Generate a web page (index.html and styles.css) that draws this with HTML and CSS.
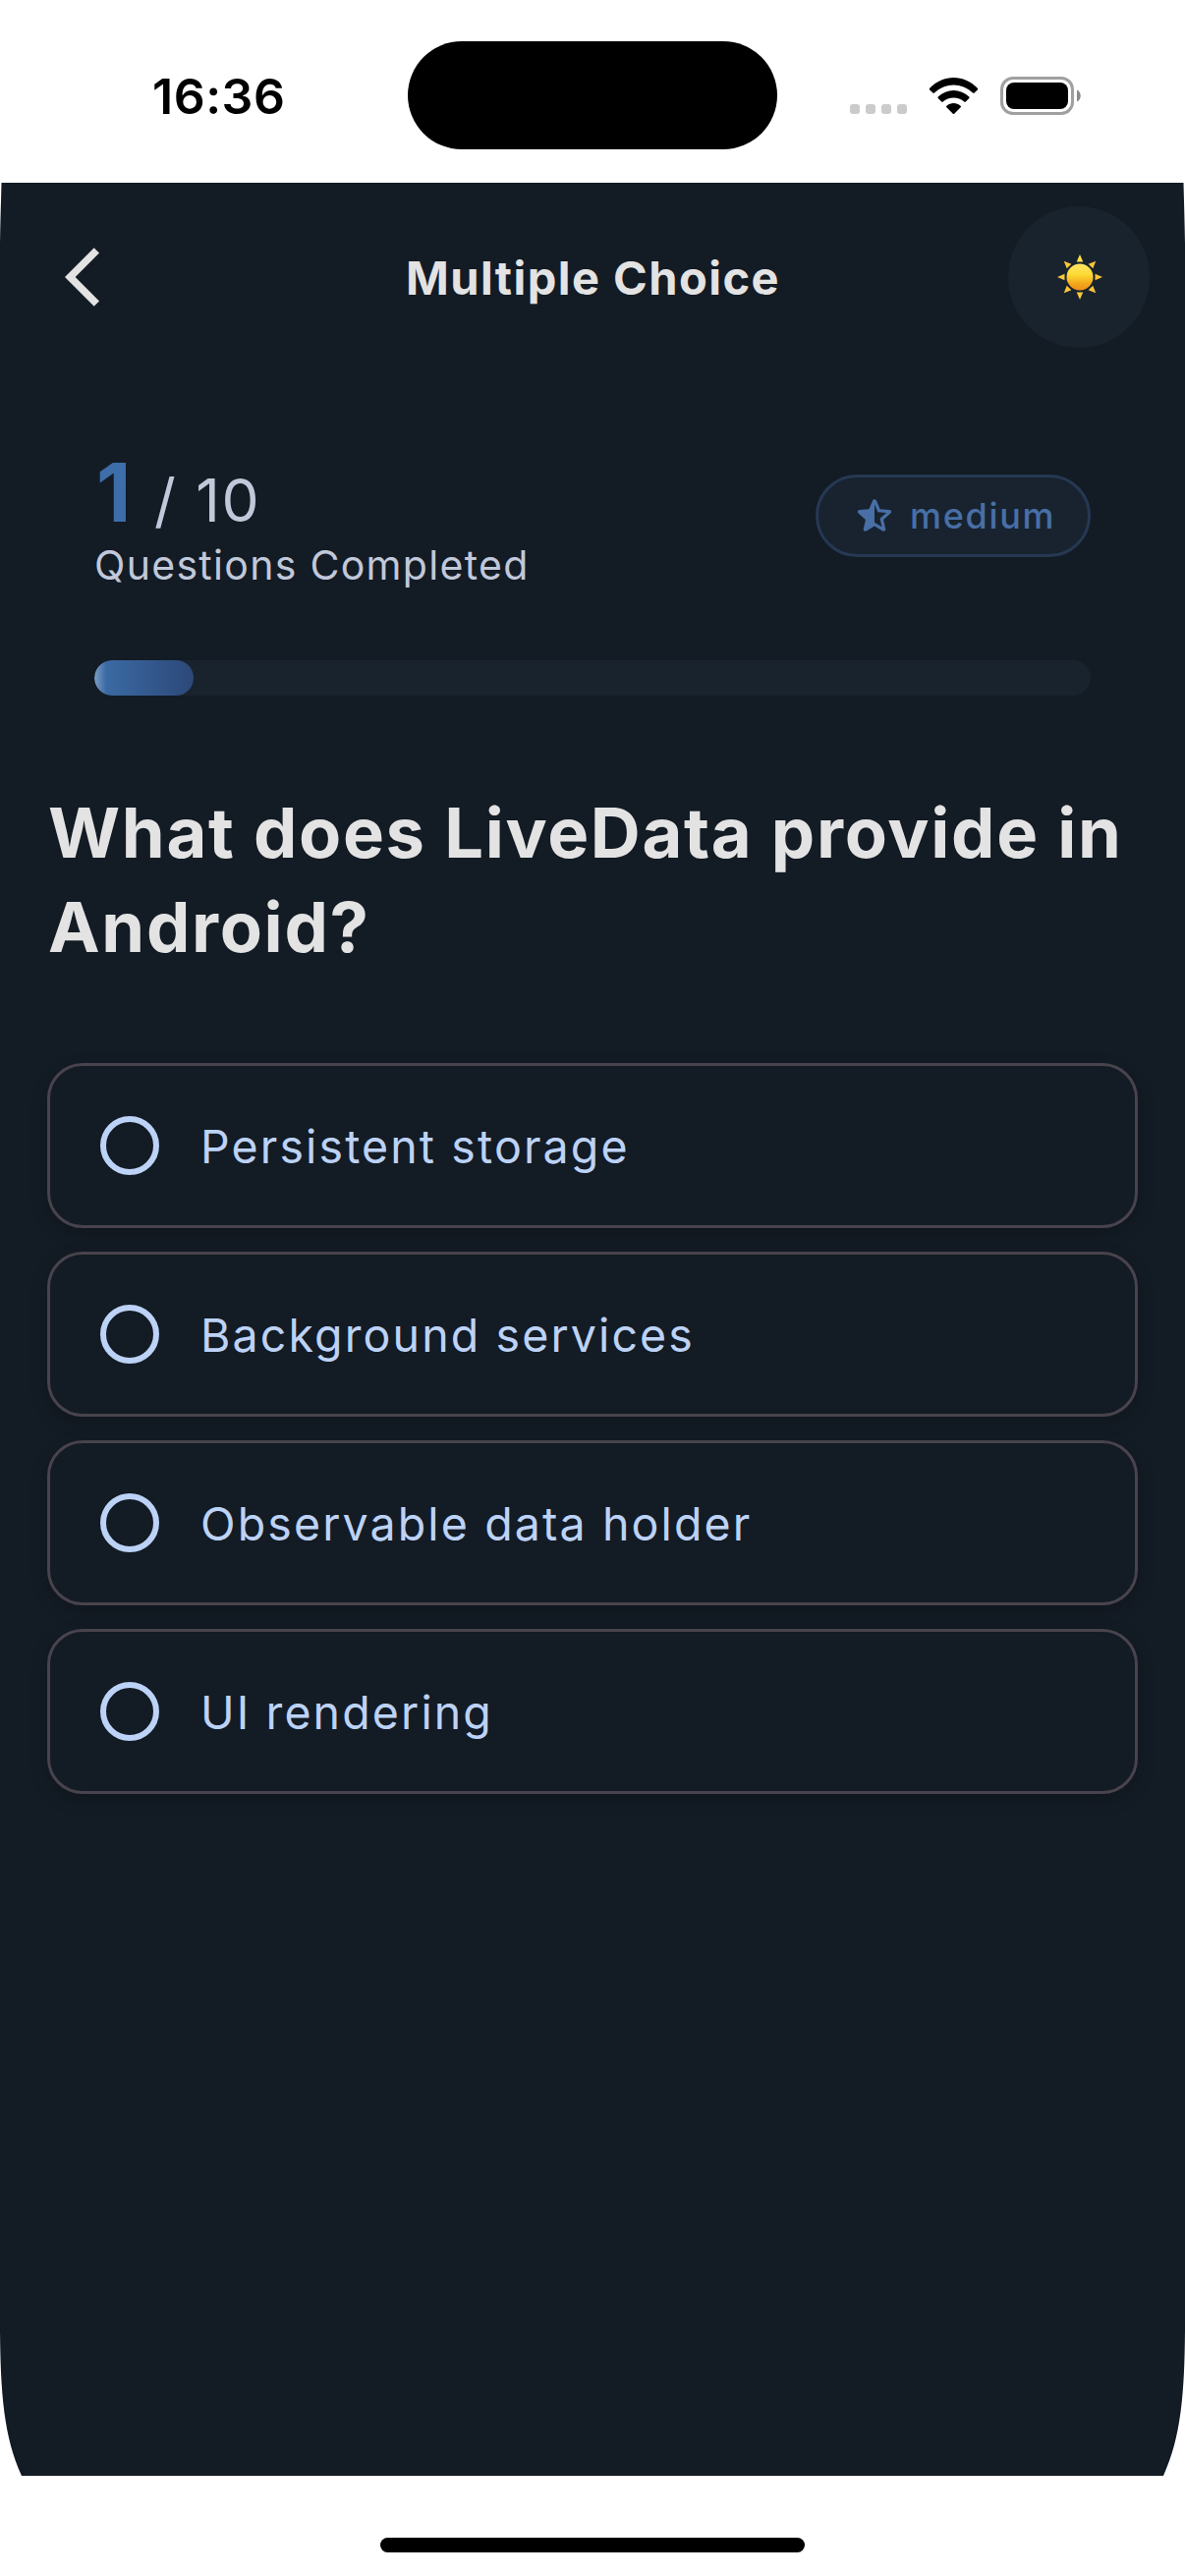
FILE: index.html
```html
<!DOCTYPE html>
<html lang="en">
<head>
<meta charset="utf-8">
<title>Multiple Choice</title>
<link rel="stylesheet" href="styles.css">
</head>
<body>
<div class="phone">
  <header class="status">
    <div class="clock">16:36</div>
    <div class="island"></div>
    <div class="indicators">
      <div class="cell"><i></i><i></i><i></i><i></i></div>
      <svg class="wifi" viewBox="0 0 51 38" aria-hidden="true">
        <path d="M1.200 10.700C15-3.500 36-3.500 49.800 10.700Q50.600 11.600 49.800 12.400L46.600 15.600Q45.900 16.300 45.100 15.600C33.500 4.700 17.500 4.700 5.900 15.600Q5.100 16.300 4.400 15.600L1.200 12.400Q.4 11.600 1.200 10.700z"/>
        <path d="M9.700 19.600C18.700 10.800 32.300 10.800 41.300 19.600Q42 20.300 41.300 21.100L37.800 24.600Q37.100 25.300 36.300 24.600C30.300 19.200 20.700 19.200 14.700 24.600Q13.900 25.300 13.200 24.600L9.700 21.100Q9 20.300 9.700 19.600z"/>
        <path d="M18.400 28.800C22.500 25 28.500 25 32.600 28.800Q33.400 29.500 32.700 30.200L26.200 36.800Q25.500 37.400 24.800 36.800L18.300 30.200Q17.600 29.500 18.400 28.800z"/>
      </svg>
      <svg class="battery" viewBox="0 0 84 40" aria-hidden="true">
        <rect x="1.500" y="1.500" width="72" height="36" rx="11.500" fill="none" stroke="#a0a0a0" stroke-width="3"/>
        <rect x="6" y="6" width="63" height="27" rx="8" fill="#000"/>
        <path d="M78 13.500c5 2 5 10 0 12z" fill="#8a8a8a"/>
      </svg>
    </div>
  </header>

  <main class="app">
    <nav class="bar">
      <svg class="back" viewBox="0 0 24 24" aria-label="Back"><path d="M11.670 3.870 9.900 2.100 0 12l9.900 9.900 1.770-1.770L3.540 12z"/></svg>
      <h1 class="title">Multiple Choice</h1>
      <button class="theme" aria-label="Theme">
        <svg class="sun" viewBox="-24 -24 48 48">
          <defs>
            <linearGradient id="disc" x1="0" y1="0" x2="0" y2="1">
              <stop offset="0" stop-color="#ffe568"/><stop offset=".4" stop-color="#fddb35"/><stop offset=".75" stop-color="#f3a71c"/><stop offset="1" stop-color="#ee8f16"/>
            </linearGradient>
            <path id="ray" d="M0-23 3.300-15.500H-3.300z"/>
          </defs>
          <circle r="13.500" fill="url(#disc)"/>
          <g fill="#fbc638">
            <use href="#ray" fill="#fde04a"/><use href="#ray" transform="rotate(45)"/><use href="#ray" transform="rotate(90)"/><use href="#ray" transform="rotate(135)"/>
            <use href="#ray" transform="rotate(180)"/><use href="#ray" transform="rotate(225)"/><use href="#ray" transform="rotate(270)"/><use href="#ray" transform="rotate(315)"/>
          </g>
        </svg>
      </button>
    </nav>

    <section class="progress">
      <div class="summary">
        <div class="count">
          <div class="numbers"><span class="done">1</span><span class="total"> / 10</span></div>
          <div class="caption">Questions Completed</div>
        </div>
        <div class="badge">
          <svg class="star" viewBox="0 0 24 24" aria-hidden="true"><path d="M19.650 9.040l-4.840-.420-1.890-4.450c-.340-.810-1.500-.810-1.840 0L9.190 8.630l-4.830.410c-.880.070-1.240 1.170-.570 1.750l3.670 3.180-1.100 4.720c-.200.860.730 1.540 1.490 1.080l4.150-2.500 4.150 2.510c.760.460 1.690-.220 1.490-1.080l-1.100-4.730 3.670-3.180c.670-.580.320-1.680-.560-1.750zM12 15.400V6.100l1.710 4.040 4.380.380-3.320 2.880 1 4.280L12 15.400z"/></svg>
          <span>medium</span>
        </div>
      </div>
      <div class="track"><div class="fill"></div></div>
    </section>

    <h2 class="question">What does LiveData provide in Android?</h2>

    <div class="options">
      <div class="option"><span class="radio"></span><span class="label">Persistent storage</span></div>
      <div class="option"><span class="radio"></span><span class="label">Background services</span></div>
      <div class="option"><span class="radio"></span><span class="label">Observable data holder</span></div>
      <div class="option"><span class="radio"></span><span class="label">UI rendering</span></div>
    </div>
  </main>

  <footer class="home"><div class="handle"></div></footer>
</div>
</body>
</html>
```
FILE: styles.css
```css
* { box-sizing: border-box; margin: 0; padding: 0; }

body {
  background: #fff;
  font-family: Inter, "Liberation Sans", sans-serif;
}

.phone {
  width: 1206px;
  height: 2622px;
  display: flex;
  flex-direction: column;
  overflow: hidden;
}

/* Status bar */
.status {
  height: 186px;
  display: grid;
  grid-template-columns: 415px 376px 1fr;
  padding-top: 42px;
  align-items: start;
}
.clock {
  padding-left: 155px;
  height: 111px;
  line-height: 112px;
  font-size: 50px;
  font-weight: 600;
  letter-spacing: 0.500px;
  color: #000;
}
.island { height: 110px; border-radius: 55px; background: #000; }
.indicators {
  display: flex;
  align-items: flex-start;
  padding: 36px 0 0 74px;
}
.cell { display: flex; gap: 6px; margin-top: 28px; }
.cell i { width: 10px; height: 10px; border-radius: 3px; background: #cbcbcb; }
.wifi { width: 51px; height: 38px; margin: 1px 22px 0 22px; }
.battery { width: 84px; height: 40px; }

/* App surface, clipped by the display's rounded corners */
.app {
  height: 2334px;
  background: #131b24;
  clip-path: path("M1.500 0 C1 20 .3 40 0 62 V2186 C.5 2250 4 2295 22 2334 H1184 C1202 2295 1205.500 2250 1206 2186 V62 C1205.700 40 1205 20 1204.500 0 Z");
}

.bar {
  height: 192px;
  padding: 0 36px 0 66px;
  display: grid;
  grid-template-columns: 144px 1fr 144px;
  align-items: center;
}
.back { width: 72px; height: 72px; fill: #e3e3e3; }
.title {
  text-align: center;
  font-size: 47px;
  font-weight: 700;
  letter-spacing: 1.450px;
  margin-left: -29px;
  color: #e3e3e3;
}
.theme {
  width: 144px;
  height: 144px;
  border: 0;
  border-radius: 50%;
  background: #19232e;
  display: flex;
  align-items: center;
  justify-content: center;
}
.sun { width: 48px; height: 48px; margin-left: 2px; }

.progress { padding: 72px 96px 0; }
.summary { display: flex; justify-content: space-between; height: 222px; }
.numbers { line-height: 104px; height: 98px; white-space: pre; }
.done { padding-left: 2px; font-size: 82px; font-weight: 700; letter-spacing: 5px; color: #3d6ea9; }
.total { font-size: 60.500px; letter-spacing: 1.700px; color: #c0c8da; }
.caption {
  font-size: 41px;
  line-height: 54px;
  letter-spacing: 1.300px;
  color: #c0c8da;
}
.badge {
  margin-top: 33px;
  width: 280px;
  height: 84px;
  padding-left: 33px;
  border: 3px solid #263853;
  border-radius: 42px;
  background: #18232f;
  display: flex;
  align-items: center;
  gap: 12px;
  color: #486fa6;
  font-size: 36px;
  font-weight: 500;
  letter-spacing: 1.700px;
}
.star { width: 48px; height: 48px; fill: #486fa6; }
.track { height: 36px; border-radius: 18px; background: #19232e; overflow: hidden; }
.fill {
  width: 10%;
  height: 36px;
  border-radius: 18px;
  background:
    linear-gradient(90deg, rgba(255,255,255,.32), rgba(255,255,255,0) 12px),
    linear-gradient(90deg, #3d6ea9, #2c4878);
}

.question {
  margin-top: 92px;
  padding: 0 20px 0 49px;
  font-size: 70.500px;
  line-height: 96px;
  font-weight: 700;
  letter-spacing: 1.680px;
  color: #e3e3e3;
}

.options {
  margin-top: 90px;
  padding: 0 48px;
  display: flex;
  flex-direction: column;
  gap: 24px;
}
.option {
  height: 168px;
  padding-left: 51px;
  border: 3px solid #48434c;
  border-radius: 36px;
  background: #131b24;
  box-shadow: 0 6px 18px rgba(0,0,0,.18);
  display: flex;
  align-items: center;
  gap: 42px;
}
.radio { width: 60px; height: 60px; border: 6px solid #bcd2f6; border-radius: 50%; }
.label { padding-top: 2px; font-size: 46.500px; letter-spacing: 2.120px; color: #bcd2f6; }

.home { flex: 1; display: flex; justify-content: center; padding-top: 63px; }
.handle { width: 432px; height: 15px; border-radius: 7.500px; background: #000; }
```
